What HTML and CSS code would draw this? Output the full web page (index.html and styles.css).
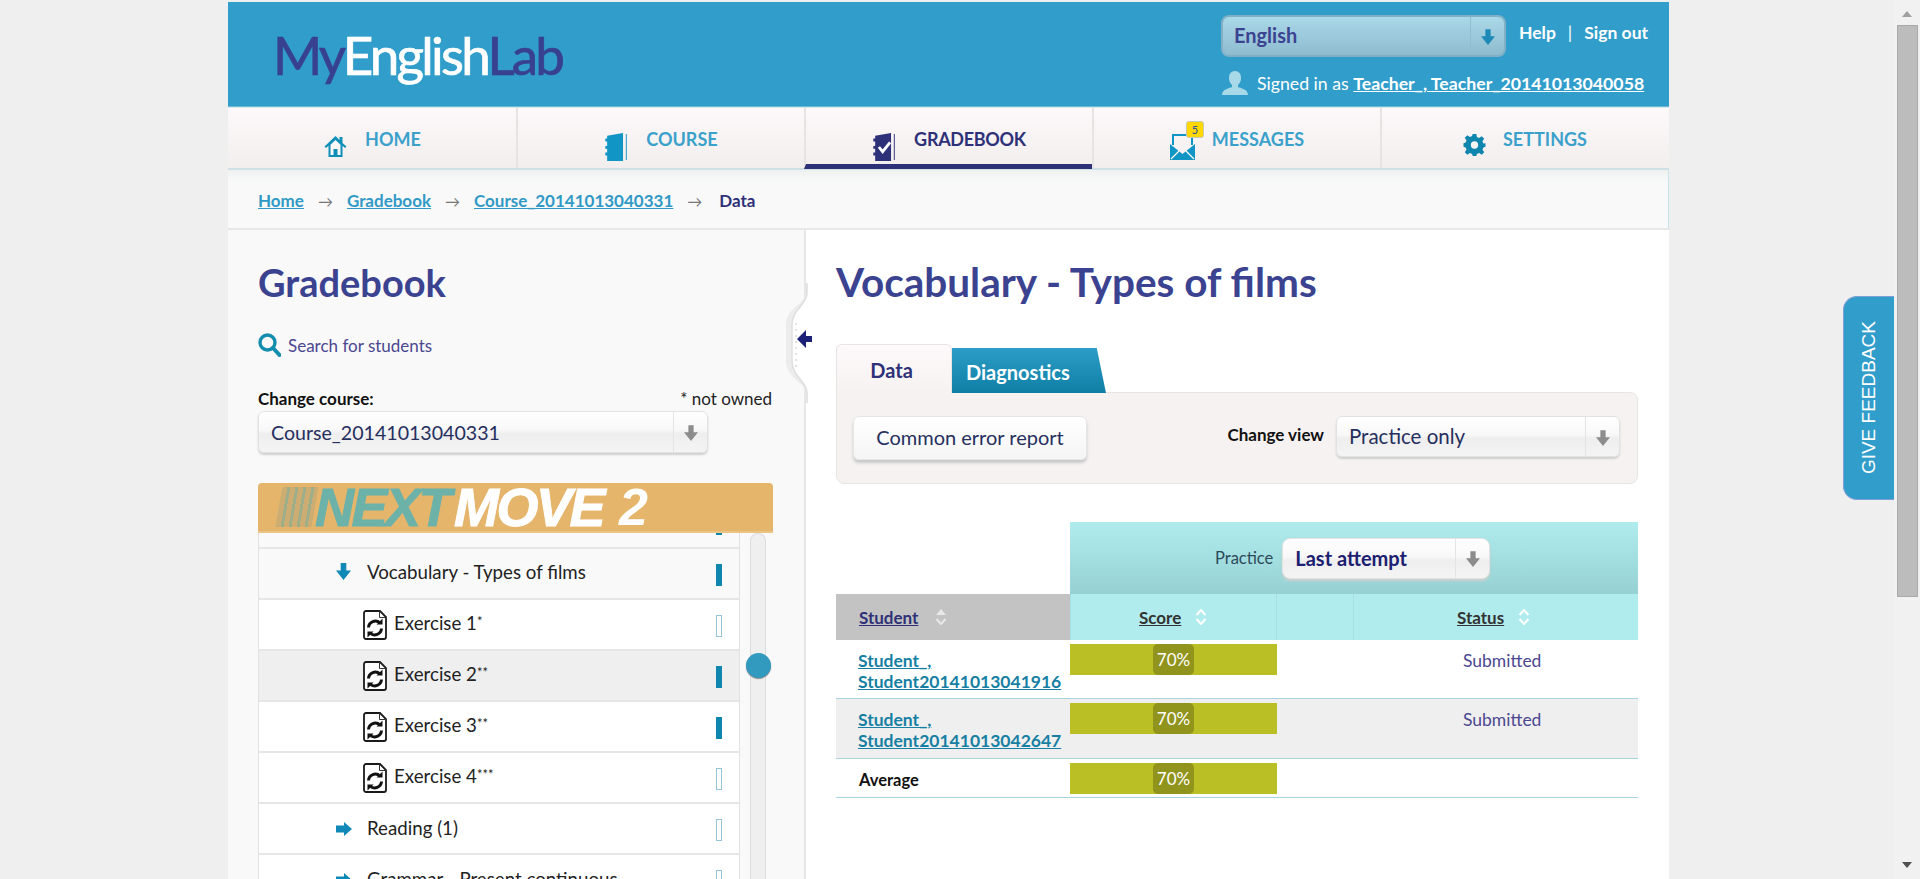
FILE: index.html
```html
<!DOCTYPE html>
<html lang="en">
<head>
<meta charset="utf-8">
<title>MyEnglishLab Gradebook</title>
<link rel="stylesheet" href="styles.css">
</head>
<body>
<svg class="defs" width="0" height="0" aria-hidden="true">
  <symbol id="down" viewBox="0 0 16 18"><path d="M5 0h6v8h5l-8 10L0 8h5z"/></symbol>
  <symbol id="right" viewBox="0 0 16 14"><path d="M0 3.500h8V0l8 7-8 7v-3.500H0z"/></symbol>
  <symbol id="ex" viewBox="0 0 24 30"><path d="M3 1h14l6 6v20a2 2 0 0 1-2 2H3a2 2 0 0 1-2-2V3a2 2 0 0 1 2-2z" fill="#fff" stroke="#1a1a1a" stroke-width="1.800"/><path d="M16.500 1v6.500H23" fill="none" stroke="#333" stroke-width="1"/><path d="M5.500 17.500a6.800 6.800 0 0 1 11.500-4.500M18.500 18.500a6.800 6.800 0 0 1-11.500 4.500" fill="none" stroke="#111" stroke-width="3"/><path d="M13.500 14.500h6v-6zM10.500 21.500h-6v6z" fill="#111"/></symbol>
</svg>
<div class="viewport">
  <div class="page">
    <header class="top">
      <div class="logo"><span class="logo-dark">My</span><span class="logo-light">English</span><span class="logo-dark">Lab</span></div>
      <div class="top-right">
        <div class="top-row">
          <div class="sel sel-lang"><span class="sel-text">English</span><span class="sel-btn"><svg class="sel-arrow"><use href="#down"/></svg></span></div>
          <div class="top-links"><a>Help</a><span class="pipe">|</span><a>Sign out</a></div>
        </div>
        <div class="signed">
          <svg class="user-ico" viewBox="0 0 26 24"><path d="M13 0c4 0 6 3 6 7 0 3-1 5-3 7v2c2 1 10 2 10 8H0c0-6 8-7 10-8v-2C8 12 7 10 7 7c0-4 2-7 6-7z" fill="#a8d9e8"/></svg>
          <span>Signed in as <a>Teacher_, Teacher_20141013040058</a></span>
        </div>
      </div>
    </header>
    <nav class="nav">
      <a class="nav-item">
        <svg class="ni ni-home" viewBox="0 0 24 24"><path d="M12 2L1 12.500l1.500 1.500L5 11.700V23h14V11.700l2.500 2.300 1.500-1.500L19 9V3h-3v3z" fill="#0f8fb8"/><path d="M12 6l5 4.800V21h-3v-6h-4v6H7V10.800z" fill="#fbf7f7"/></svg>
        <span>HOME</span>
      </a>
      <a class="nav-item">
        <svg class="ni ni-book" viewBox="0 0 24 30"><path d="M2 3l17-3v30H2v-6H0v-3h2v-4H0v-3h2v-5H0V6h2z" fill="#1095c4"/><path d="M22 1h1v28h-1z" fill="#1095c4"/></svg>
        <span>COURSE</span>
      </a>
      <a class="nav-item active">
        <svg class="ni ni-book" viewBox="0 0 24 30"><path d="M2 3l17-3v30H2v-6H0v-3h2v-4H0v-3h2v-5H0V6h2z" fill="#2f3178"/><path d="M22 1h1v28h-1z" fill="#2f3178"/><path d="M6 15l4 5 8-10" fill="none" stroke="#fff" stroke-width="3"/></svg>
        <span>GRADEBOOK</span>
      </a>
      <a class="nav-item nav-msg">
        <span class="msg-ico">
          <svg class="ni ni-mail" viewBox="0 0 25 26"><path d="M3 11V1h19v10" fill="none" stroke="#1095c4" stroke-width="2"/><path d="M0 10l12.500 10L25 10v16H0z" fill="#1095c4"/><path d="M1 25l8-8M24 25l-8-8" stroke="#fff" stroke-width="1.200"/></svg>
          <b class="badge">5</b>
        </span>
        <span>MESSAGES</span>
      </a>
      <a class="nav-item">
        <svg class="ni ni-gear" viewBox="0 0 24 24"><path d="M10 0h4l.6 3.300 2.400 1 2.800-1.900 2.800 2.800L20.700 8l1 2.400L24 10v4l-2.300.6-1 2.400 1.900 2.800-2.800 2.800-2.800-1.900-2.400 1-.6 2.300h-4l-.6-2.300-2.400-1-2.800 1.900-2.800-2.800L3.300 17l-1-2.400L0 14v-4l2.300-.6 1-2.400-1.900-2.800 2.800-2.800L7 3.300l2.400-1z" fill="#0f86ad"/><circle cx="12" cy="12" r="4" fill="#f8f4f4"/></svg>
        <span>SETTINGS</span>
      </a>
    </nav>
    <div class="crumbs">
      <a>Home</a><i>→</i><a>Gradebook</a><i>→</i><a>Course_20141013040331</a><i>→</i><b>Data</b>
    </div>
    <main class="main">
      <aside class="side">
        <h2 class="h-title">Gradebook</h2>
        <div class="search">
          <svg class="search-ico" viewBox="0 0 23 24"><circle cx="9.500" cy="9.500" r="7.500" fill="none" stroke="#138cae" stroke-width="3.400"/><path d="M15 15l6.500 7" stroke="#138cae" stroke-width="4" stroke-linecap="round"/></svg>
          <span>Search for students</span>
        </div>
        <div class="course-head"><b>Change course:</b><span>* not owned</span></div>
        <div class="sel sel-course"><span class="sel-text">Course_20141013040331</span><span class="sel-btn"><svg class="sel-arrow"><use href="#down"/></svg></span></div>
        <div class="banner"><span class="stripes"></span><span class="b-next">NEXT</span><span class="b-move">MOVE</span><span class="b-two">2</span></div>
        <div class="tree-wrap">
          <div class="tree">
            <div class="row row-partial"><span class="mark on"></span></div>
            <div class="row l1 tint"><svg class="tw tw-down"><use href="#down"/></svg><span class="row-text">Vocabulary - Types of films</span><span class="mark on"></span></div>
            <div class="row l2"><svg class="ex"><use href="#ex"/></svg><span class="row-text">Exercise 1<sup>*</sup></span><span class="mark"></span></div>
            <div class="row l2 sel-row"><svg class="ex"><use href="#ex"/></svg><span class="row-text">Exercise 2<sup>**</sup></span><span class="mark on"></span></div>
            <div class="row l2"><svg class="ex"><use href="#ex"/></svg><span class="row-text">Exercise 3<sup>**</sup></span><span class="mark on"></span></div>
            <div class="row l2"><svg class="ex"><use href="#ex"/></svg><span class="row-text">Exercise 4<sup>***</sup></span><span class="mark"></span></div>
            <div class="row l1"><svg class="tw tw-right"><use href="#right"/></svg><span class="row-text">Reading (1)</span><span class="mark"></span></div>
            <div class="row l1"><svg class="tw tw-right"><use href="#right"/></svg><span class="row-text">Grammar - Present continuous</span><span class="mark"></span></div>
          </div>
          <div class="track"><span class="thumb"></span></div>
        </div>
        <svg class="handle" viewBox="0 0 40 120">
          <path d="M32 0V8C32 22 12 24 12 42V78C12 96 32 98 32 112V120H40V0Z" fill="#ececec"/>
          <path d="M33 0V10C33 22 18 26 18 42V78C18 94 33 98 33 110V120H40V0Z" fill="#fff"/>
          <path d="M33 0V10C33 22 18 26 18 42V78C18 94 33 98 33 110V120" fill="none" stroke="#dedede" stroke-width="1.500"/>
          <path d="M22 40V84" stroke="#e2e2e2" stroke-width="2" stroke-dasharray="2 4"/>
          <path d="M38 53H32V47L23 56l9 9V59H38z" fill="#1c2076"/>
        </svg>
      </aside>
      <section class="content">
        <h1 class="h-title h-main">Vocabulary - Types of films</h1>
        <div class="tabs"><span class="tab tab-on">Data</span><span class="tab tab-off">Diagnostics</span></div>
        <div class="panel">
          <button class="btn">Common error report</button>
          <div class="view"><b>Change view</b>
            <div class="sel sel-view"><span class="sel-text">Practice only</span><span class="sel-btn"><svg class="sel-arrow"><use href="#down"/></svg></span></div>
          </div>
        </div>
        <div class="grid">
          <div class="g-blank"></div>
          <div class="g-practice"><span>Practice</span>
            <div class="sel sel-att"><span class="sel-text">Last attempt</span><span class="sel-btn"><svg class="sel-arrow"><use href="#down"/></svg></span></div>
          </div>
          <div class="gh gh-student"><a>Student</a><svg class="sort" viewBox="0 0 12 16"><path d="M6 0l5 6H1z" fill="#e8e8e8"/><path d="M1.500 10l4.500 5 4.500-5" fill="none" stroke="#e8e8e8" stroke-width="2"/></svg></div>
          <div class="gh gh-score"><a>Score</a><svg class="sort" viewBox="0 0 12 16"><path d="M1.500 6L6 1l4.500 5M1.500 10l4.500 5 4.500-5" fill="none" stroke="#fff" stroke-width="2"/></svg></div>
          <div class="gh gh-mid"></div>
          <div class="gh gh-status"><a>Status</a><svg class="sort" viewBox="0 0 12 16"><path d="M1.500 6L6 1l4.500 5M1.500 10l4.500 5 4.500-5" fill="none" stroke="#fff" stroke-width="2"/></svg></div>

          <div class="gc gc-name"><a>Student_,<br>Student20141013041916</a></div>
          <div class="gc gc-bar"><div class="bar"><span>70%</span></div></div>
          <div class="gc"></div>
          <div class="gc gc-status">Submitted</div>

          <div class="gc gc-name alt"><a>Student_,<br>Student20141013042647</a></div>
          <div class="gc gc-bar alt"><div class="bar"><span>70%</span></div></div>
          <div class="gc alt"></div>
          <div class="gc gc-status alt">Submitted</div>

          <div class="gc gc-name gc-avg"><b>Average</b></div>
          <div class="gc gc-bar"><div class="bar"><span>70%</span></div></div>
          <div class="gc"></div>
          <div class="gc"></div>
        </div>
      </section>
    </main>
  </div>
  <div class="feedback"><span>GIVE FEEDBACK</span></div>
</div>
<div class="scrollbar">
  <span class="sb-up"></span>
  <span class="sb-thumb"></span>
  <span class="sb-down"></span>
</div>
</body>
</html>
```

FILE: styles.css
```css
* { box-sizing: border-box; }
html, body { height: 100%; }
body {
  margin: 0;
  display: flex;
  height: 879px;
  overflow: hidden;
  background: #efefef;
  font-family: "Lato", "Liberation Sans", sans-serif;
  font-size: 16px;
  color: #222;
}
a { cursor: pointer; }
.defs { position: absolute; }

.viewport { flex: 1; position: relative; min-width: 0; height: 879px; overflow: hidden; }
.page { width: 1441px; margin: 2px 0 0 228px; }

/* header */
.top {
  height: 105px;
  background: #319dcb;
  display: flex;
  justify-content: space-between;
  padding: 13px 19px 0 45px;
  border-bottom: 1px solid #6fb8d8;
}
.logo { font-size: 53px; line-height: 60px; margin-top: 10px; letter-spacing: -2.800px; font-family: "Lato", sans-serif; -webkit-text-stroke: .7px currentColor; }
.logo-dark { color: #38418f; }
.logo-light { color: #fff; }
.top-right { display: flex; flex-direction: column; width: 429px; }
.top-row { display: flex; align-items: flex-start; }
.top-links { margin-left: 13px; color: #fff; font-weight: 700; font-size: 17.500px; line-height: 22px; margin-top: 7px; white-space: nowrap; }
.pipe { margin: 0 12px; font-weight: 400; }
.signed { display: flex; align-items: center; gap: 9px; color: #fff; margin: 14px 0 0 1px; font-size: 17.700px; white-space: nowrap; }
.signed a { font-weight: 700; text-decoration: underline; }
.user-ico { width: 26px; height: 24px; }

/* fake select */
.sel {
  display: flex;
  align-items: stretch;
  border-radius: 6px;
  background: linear-gradient(#fff 0%, #f8f8f8 45%, #eeeeee 55%, #f4f4f4 100%);
  border: 1px solid #e2e2e2;
  box-shadow: 0 2px 2px #cfcfcf;
  color: #262f5e;
}
.sel-text { flex: 1; display: flex; align-items: center; padding-left: 12px; white-space: nowrap; font-size: 20px; }
.sel-btn { width: 34px; border-left: 1px solid #e4e4e4; display: flex; align-items: center; justify-content: center; }
.sel-arrow { width: 14px; height: 16px; fill: #8c8c8c; margin-top: 2px; }
.sel-lang { width: 285px; height: 42px; background: linear-gradient(#a9d8e8, #8fbbcf); border: 2px solid #7fb0c6; box-shadow: none; border-radius: 8px; }
.sel-lang .sel-text { font-size: 20px; font-weight: 700; color: #3b4391; padding-left: 11px; padding-bottom: 2px; }
.sel-lang .sel-btn { border-left-color: #92bccf; }
.sel-lang .sel-arrow { fill: #1d8ab5; }

/* nav */
.nav {
  display: grid;
  grid-template-columns: repeat(5, 288px);
  height: 63px;
  background: linear-gradient(#fdf9fa, #f2eeee);
  border-bottom: 2px solid #cfe0e6;
  border-top: 1px solid #d7e8ef;
}
.nav-item {
  display: flex;
  align-items: flex-start;
  justify-content: center;
  gap: 17px;
  padding-top: 20px;
  color: #3ba1cb;
  font-size: 18px;
  font-weight: 700;
  line-height: 22px;
  border-left: 2px solid #e6e3e3;
  position: relative;
}
.nav-item:first-child { border-left: 0; }
.nav-item.active { color: #2f3178; border-bottom: 5px solid #2f3178; margin-bottom: -1px; letter-spacing: -.3px; }
.nav-msg { border-right: 0; gap: 0; }
.ni { flex: none; margin-top: 6px; }
.ni-home { width: 25px; height: 24px; }
.ni-book { width: 25px; height: 28px; margin-top: 5px; }
.ni-gear { width: 23px; height: 22px; }
.ni-mail { width: 25px; height: 26px; margin-top: 12px; display: block; }
.msg-ico { position: relative; width: 42px; flex: none; margin-top: -6px; }
.badge {
  position: absolute;
  left: 16px;
  top: -1px;
  width: 18px;
  height: 17px;
  background: #ffd800;
  border: 1px solid #c9c9b0;
  border-radius: 3px;
  font-size: 11px;
  line-height: 15px;
  text-align: center;
  font-weight: 400;
  color: #2a4d9a;
}

/* breadcrumbs */
.crumbs {
  height: 60px;
  background: linear-gradient(#eff1f1, #f9f9f9 12px);
  border-bottom: 2px solid #e8e8e8;
  border-right: 1px solid #c6e2ea;
  padding: 3px 0 0 30px;
  display: flex;
  align-items: center;
  font-size: 17px;
  color: #2f3178;
}
.crumbs a { color: #3199c5; font-weight: 700; text-decoration: underline; }
.crumbs i { font-style: normal; color: #777; margin: 0 14px; font-size: 15px; }
.crumbs b { margin-left: 3px; }

/* columns */
.main { display: flex; height: 649px; background: #fff; }
.side { width: 578px; flex: none; background: #f9f9f9; border-right: 2px solid #e6e6e6; padding-left: 30px; position: relative; }
.content { flex: 1; padding-left: 30px; min-width: 0; width: 862px; }
.h-title { margin: 0; font-size: 38px; line-height: 46px; font-weight: 700; color: #3b4391; padding-top: 29px; }
.h-main { font-size: 40.500px; line-height: 48px; padding-top: 28px; }

.search { display: flex; align-items: center; gap: 7px; margin-top: 28px; color: #4b4791; height: 24px; font-size: 17px; }
.search-ico { width: 23px; height: 24px; }
.course-head { display: flex; justify-content: space-between; width: 514px; margin-top: 32px; line-height: 20px; font-size: 17px; color: #222; }
.course-head b { color: #111; }
.sel-course { width: 450px; height: 42px; margin-top: 2px; }
.sel-course .sel-text { font-size: 19.600px; color: #262f5e; }

.banner {
  width: 515px;
  height: 50px;
  margin-top: 30px;
  background: #e6b56c;
  border-radius: 4px 4px 0 0;
  border-bottom: 2px solid #eac385;
  display: flex;
  align-items: center;
  padding-left: 21px;
  font-family: "Liberation Sans", sans-serif;
  font-weight: 700;
  font-style: italic;
  font-size: 54px;
  line-height: 48px;
}
.stripes { width: 36px; height: 40px; transform: skewX(-10deg); background: repeating-linear-gradient(90deg, #c8ab72 0 5px, #8fae8e 5px 8px); opacity: .85; }
.b-next { color: #6cb2a9; letter-spacing: -2.500px; margin-right: 5px; -webkit-text-stroke: 1px #6cb2a9; }
.b-move { color: #fff; letter-spacing: -2.500px; margin-right: 16px; -webkit-text-stroke: 1px #fff; }
.b-two { color: #fff; font-size: 52px; }

.tree-wrap { display: flex; width: 515px; height: 346px; }
.tree { width: 482px; flex: none; overflow: hidden; border-left: 1px solid #e2e2e2; border-right: 1px solid #e2e2e2; }
.row {
  height: 51px;
  display: flex;
  align-items: center;
  background: #fff;
  border-bottom: 2px solid #e6e6e6;
  font-size: 18.700px;
  color: #222;
  position: relative;
}
.row-partial { height: 16px; background: #f9f9f9; align-items: flex-start; }
.row-partial .mark { height: 2px; }
.tint { background: #f9f9f9; height: 51px; }
.tint .row-text { margin-top: -3px; }
.sel-row { background: #efefef; }
.row-text { white-space: nowrap; margin-top: -1px; }
.row sup { font-size: 13px; line-height: 0; vertical-align: 4px; }
.l1 { padding-left: 77px; }
.l2 { padding-left: 104px; }
.tw { flex: none; fill: #1089b6; }
.tw-down { width: 15px; height: 17px; margin-right: 16px; margin-top: -4px; }
.tw-right { width: 16px; height: 14px; margin-right: 15px; }
.ex { width: 24px; height: 30px; flex: none; margin-right: 7px; }
.l2 .row-text { margin-top: -4px; }
.mark { position: absolute; left: 457px; top: 15px; width: 6px; height: 22px; border: 1px solid #93c4d8; background: #fff; }
.mark.on { background: #0f86ad; border-color: #0f86ad; }
.row-partial .mark { top: 0; }
.track { width: 16px; margin-left: 10px; background: #efefef; border: 1px solid #dcdcdc; border-radius: 8px 8px 0 0; border-bottom: 0; position: relative; }
.thumb { position: absolute; left: -5px; top: 119px; width: 25px; height: 25px; border-radius: 50%; background: #3299bf; box-shadow: 0 1px 1px #888; }
.handle { position: absolute; left: 546px; top: 53px; width: 40px; height: 120px; z-index: 2; overflow: visible; }

/* content */
.tabs { display: flex; margin: 38px 0 -1px; height: 49px; align-items: flex-end; font-size: 20px; font-weight: 700; position: relative; z-index: 1; }
.tab { display: flex; align-items: center; }
.tab-on { width: 116px; height: 49px; justify-content: center; padding: 2px 5px 0 0; background: linear-gradient(#fdf9fa, #f7f2f2); border: 1px solid #e8e4e4; border-bottom: 0; border-radius: 6px 6px 0 0; color: #2f3178; }
.tab-off { width: 154px; height: 45px; padding: 2px 0 0 14px; background: linear-gradient(#2c9dc6, #0f7fa6); color: #fff; clip-path: polygon(0 0, 94% 0, 100% 100%, 0 100%); }
.panel {
  width: 802px;
  height: 92px;
  background: #f7f2f2;
  border: 1px solid #e8e4e4;
  border-radius: 0 8px 8px 8px;
  display: flex;
  justify-content: space-between;
  padding: 23px 17px 0 16px;
}
.btn {
  width: 234px;
  height: 44px;
  padding: 0 0 3px;
  font: inherit;
  font-size: 20px;
  color: #262f5e;
  background: linear-gradient(#fff, #f5f5f5);
  border: 1px solid #e6e6e6;
  border-radius: 6px;
  box-shadow: 0 3px 3px #c8c8c8;
}
.view { display: flex; align-items: flex-start; gap: 12px; color: #111; font-size: 17px; }
.view b { margin-top: 8px; }
.sel-view { width: 284px; height: 41px; }
.sel-view .sel-text { font-size: 20.500px; padding-bottom: 2px; }

.grid {
  width: 802px;
  margin-top: 38px;
  display: grid;
  grid-template-columns: 234px 206px 77px 285px;
  grid-template-rows: 72px 46px 59px 60px 39px;
}
.g-practice {
  grid-column: 2 / 5;
  background: linear-gradient(#b0ecee, #96d0d2);
  display: flex;
  align-items: center;
  padding-left: 145px;
  gap: 9px;
  color: #2d4a5a;
  font-size: 16.500px;
  font-weight: 400;
}
.sel-att { width: 208px; height: 41px; border-radius: 8px; }
.sel-att .sel-text { font-weight: 700; font-size: 20px; color: #1c2070; }
.gh { background: #b0ecee; display: flex; align-items: center; gap: 14px; color: #333; font-weight: 700; font-size: 17px; }
.gh + .gh { border-left: 1px solid #a8e0e2; }
.gh a { text-decoration: underline; }
.gh-student { background: #c3c3c3; padding-left: 23px; gap: 17px; }
.gh-student a { color: #2f3178; }
.gh-score { padding-left: 68px; }
.gh-status { padding-left: 103px; }
.sort { width: 12px; height: 16px; }
.gc { border-bottom: 1px solid #a9d3df; background: #fff; font-size: 17.500px; }
.alt { background: #efefef; }
.gc-name { padding: 10px 0 0 22px; line-height: 21px; white-space: nowrap; }
.gc-name a { color: #167fa3; font-weight: 700; text-decoration: underline; }
.gc-avg { padding: 11px 0 0 23px; color: #111; font-size: 16.500px; }
.gc-bar { padding-top: 4px; }
.bar { width: 207px; height: 31px; background: #b9bf25; display: flex; justify-content: center; position: relative; z-index: 1; margin-right: -1px; }
.bar span { width: 41px; background: #91941c; border-radius: 5px; color: #fff; text-align: center; line-height: 31px; font-size: 17px; }
.gc-status { color: #4b4791; padding: 10px 0 0 110px; }

/* overlay + scrollbar */
.feedback {
  position: absolute;
  right: 0;
  top: 296px;
  width: 51px;
  height: 204px;
  background: #319dcb;
  border: 1px solid #7d9fd4;
  border-right: 0;
  border-radius: 14px 0 0 14px;
  display: flex;
  align-items: center;
  justify-content: center;
}
.feedback span { writing-mode: vertical-rl; transform: rotate(180deg); color: #fff; font-family: "Liberation Sans", sans-serif; font-size: 19px; white-space: nowrap; }
.scrollbar { width: 26px; flex: none; height: 879px; background: #f1f1f1; position: relative; }
.sb-thumb { position: absolute; left: 3px; top: 25px; width: 21px; height: 572px; background: #bcbcbc; border: 1px solid #aaa; }
.sb-up, .sb-down { position: absolute; left: 8px; width: 0; height: 0; border-left: 5px solid transparent; border-right: 5px solid transparent; }
.sb-up { top: 11px; border-bottom: 6px solid #a0a0a0; }
.sb-down { bottom: 11px; border-top: 6px solid #505050; }
```
